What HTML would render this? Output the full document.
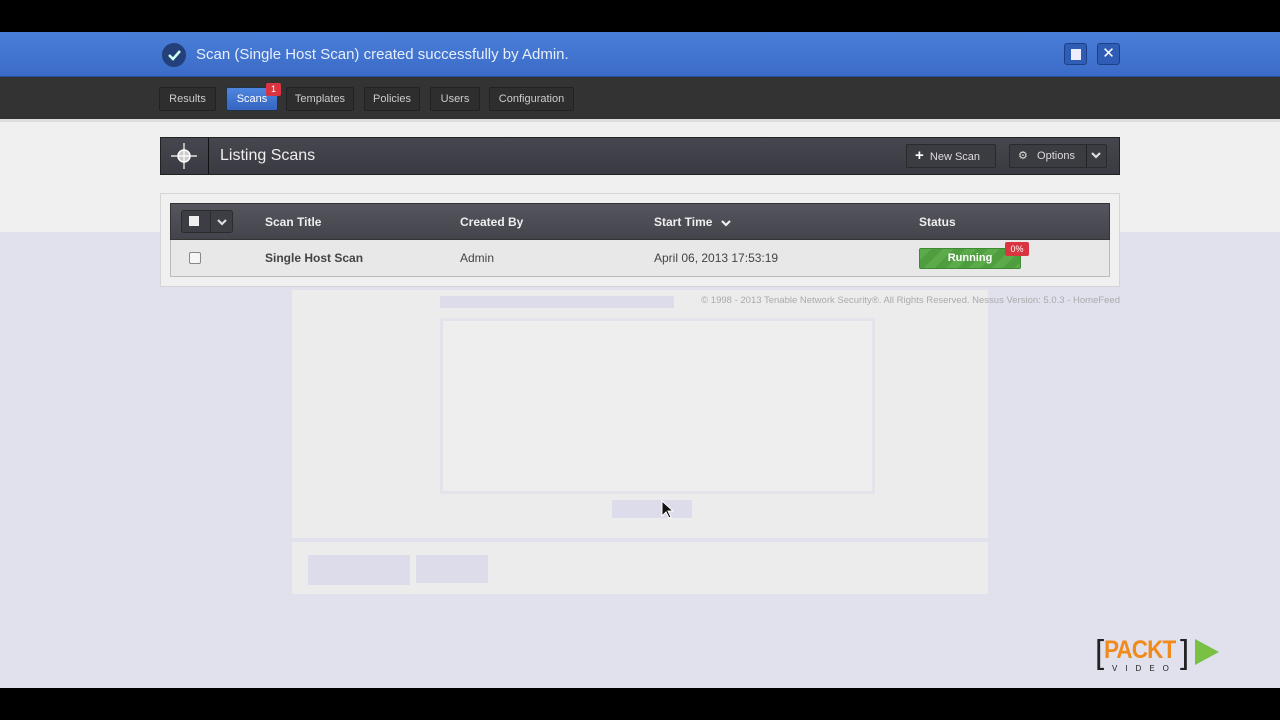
<!DOCTYPE html>
<html><head><meta charset="utf-8"><style>
*{margin:0;padding:0;box-sizing:border-box}
body{width:1280px;height:720px;overflow:hidden;background:#000;font-family:"Liberation Sans",sans-serif;position:relative}
.abs{position:absolute}
.blue{left:0;top:32px;width:1280px;height:45px;background:linear-gradient(#4a7fd8,#3a6bc8);border-bottom:1px solid #2a4f9a}
.nav{left:0;top:77px;width:1280px;height:42px;background:#333}
.grey{left:0;top:119px;width:1280px;height:113px;background:#f0f0f0;border-top:3px solid #ddd}
.lav{left:0;top:232px;width:1280px;height:456px;background:#e1e1ee}
.tab{top:87px;height:24px;border:1px solid #222;background:#2e2e2e;color:#ccc;font-size:11px;line-height:22px;text-align:center;border-radius:2px}
.hdr{left:160px;top:137px;width:960px;height:38px;background:linear-gradient(#46464f,#3a3a42);border:1px solid #222}
.btn{top:144px;height:24px;border:1px solid #2a2a2e;background:#3b3b42;color:#ddd;font-size:11px;line-height:22px;border-radius:2px}
.panel{left:160px;top:193px;width:960px;height:94px;background:#f0f0f0;border:1px solid #d4d4d4}
.th{left:170px;top:203px;width:940px;height:37px;background:linear-gradient(#55555e,#44444c);border:1px solid #333}
.th span{position:absolute;top:11px;color:#eee;font-size:12px;font-weight:bold}
.tr{left:170px;top:240px;width:940px;height:37px;background:#e8e8e8;border:1px solid #bbb;border-top:none}
.tr span{position:absolute;top:11px;color:#444;font-size:12px}
</style></head><body>
<div class="abs lav"></div>
<div class="abs" style="left:292px;top:290px;width:696px;height:248px;background:#ececec"></div>
<div class="abs" style="left:292px;top:542px;width:696px;height:52px;background:#ececec"></div>
<div class="abs" style="left:440px;top:318px;width:435px;height:176px;border:3px solid #e3e3ec;background:#eee"></div>
<div class="abs" style="left:440px;top:296px;width:234px;height:12px;background:#dcdcea"></div>
<div class="abs" style="left:308px;top:555px;width:102px;height:30px;background:#dcdcea"></div>
<div class="abs" style="left:416px;top:555px;width:72px;height:28px;background:#dcdcea"></div>
<div class="abs" style="left:612px;top:500px;width:80px;height:18px;background:#dcdcea"></div>
<div class="abs blue"></div>
<div class="abs" style="left:162px;top:43px;width:24px;height:24px;border-radius:50%;background:#23407a"><svg width="24" height="24"><path d="M7 12l4 4 7-8" stroke="#cfe" stroke-width="2.5" fill="none"/></svg></div>
<div class="abs" style="left:196px;top:46px;color:#e8eefa;font-size:15px">Scan (Single Host Scan) created successfully by Admin.</div>
<div class="abs" style="left:1064px;top:43px;width:23px;height:22px;background:#2f5cb4;border:1px solid #1e3f88;border-radius:3px"><div style="margin:5px 6px;width:10px;height:11px;background:#eef"></div></div>
<div class="abs" style="left:1097px;top:43px;width:23px;height:22px;background:#2f5cb4;border:1px solid #1e3f88;border-radius:3px;color:#fff;text-align:center;font-size:15px;line-height:20px">✕</div>
<div class="abs nav"></div>
<div class="abs tab" style="left:159px;width:57px">Results</div>
<div class="abs tab" style="left:226px;width:52px;background:linear-gradient(#4f86e0,#3565c0);color:#fff;border-color:#234">Scans</div>
<div class="abs" style="left:266px;top:83px;width:15px;height:13px;background:#d9343f;color:#fff;font-size:9px;text-align:center;line-height:13px;border-radius:2px">1</div>
<div class="abs tab" style="left:286px;width:68px">Templates</div>
<div class="abs tab" style="left:364px;width:56px">Policies</div>
<div class="abs tab" style="left:430px;width:50px">Users</div>
<div class="abs tab" style="left:489px;width:85px">Configuration</div>
<div class="abs grey"></div>
<div class="abs hdr"></div>
<div class="abs" style="left:208px;top:138px;width:1px;height:36px;background:#111"></div>
<svg class="abs" style="left:171px;top:143px" width="26" height="26"><circle cx="13" cy="13" r="6" fill="#ccc" stroke="#fff" stroke-width="1.5"/><path d="M0 13h26M13 0v26" stroke="#fff" stroke-width="1.2"/></svg>
<div class="abs" style="left:220px;top:147px;color:#eee;font-size:16px">Listing Scans</div>
<div class="abs btn" style="left:906px;width:90px;padding-left:8px"><b style="font-size:15px;color:#fff">+</b>&nbsp;&nbsp;New Scan</div>
<div class="abs btn" style="left:1009px;width:98px;padding-left:8px">⚙&nbsp;&nbsp;&nbsp;Options</div>
<div class="abs" style="left:1086px;top:145px;width:1px;height:22px;background:#222"></div>
<svg class="abs" style="left:1091px;top:151px" width="10" height="8"><path d="M1 2l4 4 4-4" stroke="#ddd" stroke-width="2.2" fill="none"/></svg>
<div class="abs panel"></div>
<div class="abs th"><span style="left:94px">Scan Title</span><span style="left:289px">Created By</span><span style="left:483px">Start Time</span><span style="left:748px">Status</span></div>
<svg class="abs" style="left:721px;top:219px" width="10" height="8"><path d="M1 2l4 4 4-4" stroke="#eee" stroke-width="2.2" fill="none"/></svg>
<div class="abs" style="left:181px;top:210px;width:52px;height:23px;border:1px solid #2a2a30;background:#3d3d45;border-radius:3px"></div>
<div class="abs" style="left:189px;top:216px;width:10px;height:10px;background:#eee"></div>
<div class="abs" style="left:210px;top:211px;width:1px;height:21px;background:#2a2a30"></div>
<svg class="abs" style="left:217px;top:218px" width="10" height="8"><path d="M1 2l4 4 4-4" stroke="#ddd" stroke-width="2.2" fill="none"/></svg>
<div class="abs tr"><span style="left:94px;font-weight:bold">Single Host Scan</span><span style="left:289px">Admin</span><span style="left:483px">April 06, 2013 17:53:19</span></div>
<div class="abs" style="left:189px;top:252px;width:12px;height:12px;border:1px solid #888;background:#f6f6f6;border-radius:2px"></div>
<div class="abs" style="left:919px;top:248px;width:102px;height:21px;background:repeating-linear-gradient(135deg,#5cab4a 0 8px,#4e9d3e 8px 16px);border:1px solid #3d8a32;border-radius:2px;color:#fff;font-size:11px;font-weight:bold;text-align:center;line-height:19px">Running</div>
<div class="abs" style="left:1005px;top:242px;width:24px;height:14px;background:#d9343f;border-radius:2px;color:#fff;font-size:9px;text-align:center;line-height:14px">0%</div>
<div class="abs" style="left:700px;top:295px;width:420px;text-align:right;color:#aaa;font-size:9.5px;white-space:nowrap">© 1998 - 2013 Tenable Network Security®. All Rights Reserved. Nessus Version: 5.0.3 - HomeFeed</div>
<svg class="abs" style="left:660px;top:500px" width="14" height="20"><path d="M2 1v15l4-4 3 6 2-1-3-6h5z" fill="#111" stroke="#fff" stroke-width="1"/></svg>
<div class="abs" style="left:1095px;top:634px;font-size:33px;color:#222;line-height:36px">[</div>
<div class="abs" style="left:1104px;top:636px;font-size:25px;color:#f08a1c;font-weight:bold;letter-spacing:-1px;transform:scaleX(.9);transform-origin:left">PACKT</div>
<div class="abs" style="left:1180px;top:634px;font-size:33px;color:#222;line-height:36px">]</div>
<div class="abs" style="left:1112px;top:664px;font-size:8px;color:#222;letter-spacing:8px">VIDEO</div>
<svg class="abs" style="left:1193px;top:638px" width="28" height="28"><path d="M2 1l24 13L2 27z" fill="#7ac143"/></svg>
</body></html>
